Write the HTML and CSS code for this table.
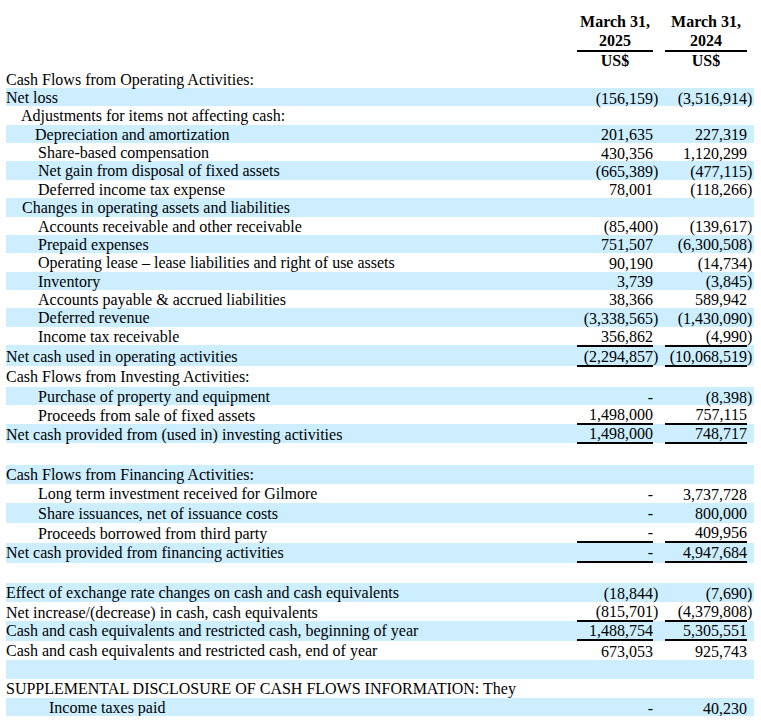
FILE: index.html
```html
<!DOCTYPE html>
<html>
<head>
<meta charset="utf-8">
<link rel="stylesheet" href="styles.css">
</head>
<body>
<div class="sheet">
  <div class="row hdr">
    <div></div>
    <div class="v1 hd top">March 31,<br>2025</div>
    <div class="v2 hd top">March 31,<br>2024</div>
  </div>
  <div class="row hdr">
    <div></div>
    <div class="v1 hd unit">US$</div>
    <div class="v2 hd unit">US$</div>
  </div>

  <div class="row h18"><div class="lbl">Cash Flows from Operating Activities:</div></div>
  <div class="row h18x sh"><div class="lbl">Net loss</div><div class="v1"><span class="n">(156,159)</span></div><div class="v2"><span class="n">(3,516,914)</span></div></div>
  <div class="row h18x"><div class="lbl i1">Adjustments for items not affecting cash:</div></div>
  <div class="row h18x sh"><div class="lbl i2">Depreciation and amortization</div><div class="v1">201,635</div><div class="v2">227,319</div></div>
  <div class="row h18x"><div class="lbl i3">Share-based compensation</div><div class="v1">430,356</div><div class="v2">1,120,299</div></div>
  <div class="row h18x sh"><div class="lbl i3">Net gain from disposal of fixed assets</div><div class="v1"><span class="n">(665,389)</span></div><div class="v2"><span class="n">(477,115)</span></div></div>
  <div class="row h18x"><div class="lbl i3">Deferred income tax expense</div><div class="v1">78,001</div><div class="v2"><span class="n">(118,266)</span></div></div>
  <div class="row h18x sh"><div class="lbl i1b">Changes in operating assets and liabilities</div></div>
  <div class="row h18x"><div class="lbl i3">Accounts receivable and other receivable</div><div class="v1"><span class="n">(85,400)</span></div><div class="v2"><span class="n">(139,617)</span></div></div>
  <div class="row h18x sh"><div class="lbl i3">Prepaid expenses</div><div class="v1">751,507</div><div class="v2"><span class="n">(6,300,508)</span></div></div>
  <div class="row h18x"><div class="lbl i3">Operating lease – lease liabilities and right of use assets</div><div class="v1">90,190</div><div class="v2"><span class="n">(14,734)</span></div></div>
  <div class="row h18x sh"><div class="lbl i3">Inventory</div><div class="v1">3,739</div><div class="v2"><span class="n">(3,845)</span></div></div>
  <div class="row h18x"><div class="lbl i3">Accounts payable &amp; accrued liabilities</div><div class="v1">38,366</div><div class="v2">589,942</div></div>
  <div class="row h18x sh"><div class="lbl i3">Deferred revenue</div><div class="v1"><span class="n">(3,338,565)</span></div><div class="v2"><span class="n">(1,430,090)</span></div></div>
  <div class="row h18x"><div class="lbl i3">Income tax receivable</div><div class="v1">356,862</div><div class="v2"><span class="n">(4,990)</span></div></div>
  <div class="row h21 sh ol ul"><div class="lbl">Net cash used in operating activities</div><div class="v1"><span class="n">(2,294,857)</span></div><div class="v2"><span class="n">(10,068,519)</span></div></div>

  <div class="row h21"><div class="lbl">Cash Flows from Investing Activities:</div></div>
  <div class="row h18 sh"><div class="lbl i3">Purchase of property and equipment</div><div class="v1">-</div><div class="v2"><span class="n">(8,398)</span></div></div>
  <div class="row h19 ul"><div class="lbl i3">Proceeds from sale of fixed assets</div><div class="v1">1,498,000</div><div class="v2">757,115</div></div>
  <div class="row h19 sh ul"><div class="lbl">Net cash provided from (used in) investing activities</div><div class="v1">1,498,000</div><div class="v2">748,717</div></div>
  <div class="row h22"></div>

  <div class="row h19 sh"><div class="lbl">Cash Flows from Financing Activities:</div></div>
  <div class="row h19"><div class="lbl i3">Long term investment received for Gilmore</div><div class="v1">-</div><div class="v2">3,737,728</div></div>
  <div class="row h20 sh"><div class="lbl i3">Share issuances, net of issuance costs</div><div class="v1">-</div><div class="v2">800,000</div></div>
  <div class="row h19x ul"><div class="lbl i3">Proceeds borrowed from third party</div><div class="v1">-</div><div class="v2">409,956</div></div>
  <div class="row h20 sh ul"><div class="lbl">Net cash provided from financing activities</div><div class="v1">-</div><div class="v2">4,947,684</div></div>
  <div class="row h20x"></div>

  <div class="row h19 sh"><div class="lbl">Effect of exchange rate changes on cash and cash equivalents</div><div class="v1"><span class="n">(18,844)</span></div><div class="v2"><span class="n">(7,690)</span></div></div>
  <div class="row h18y ul"><div class="lbl">Net increase/(decrease) in cash, cash equivalents</div><div class="v1"><span class="n">(815,701)</span></div><div class="v2"><span class="n">(4,379,808)</span></div></div>
  <div class="row h20x sh ul"><div class="lbl">Cash and cash equivalents and restricted cash, beginning of year</div><div class="v1">1,488,754</div><div class="v2">5,305,551</div></div>
  <div class="row h19"><div class="lbl">Cash and cash equivalents and restricted cash, end of year</div><div class="v1">673,053</div><div class="v2">925,743</div></div>
  <div class="row h19 sh"></div>
  <div class="row h19"><div class="lbl">SUPPLEMENTAL DISCLOSURE OF CASH FLOWS INFORMATION: They</div></div>
  <div class="row h18 sh"><div class="lbl i4">Income taxes paid</div><div class="v1">-</div><div class="v2">40,230</div></div>
</div>
</body>
</html>
```

FILE: styles.css
```css
html, body {
  margin: 0;
  padding: 0;
  background: #ffffff;
}

body {
  font-family: "Liberation Serif", "Times New Roman", serif;
  font-size: 16px;
  color: #000000;
}

.sheet {
  width: 748px;
  margin-left: 6px;
  padding-top: 12px;
}

.row {
  display: grid;
  grid-template-columns: 571px 88px 89px;
}

.sh {
  background: #cceeff;
}

.h18 { height: 18px; }
.h18x { height: 18.36px; }
.h18y { height: 18.5px; }
.h19 { height: 19px; }
.h19x { height: 19.5px; }
.h20 { height: 20px; }
.h20x { height: 20.5px; }
.h21 { height: 21px; }
.h22 { height: 22px; }

.lbl {
  display: flex;
  align-items: center;
  white-space: nowrap;
  line-height: 18px;
  padding-top: 1px;
  box-sizing: border-box;
}

.i1 { padding-left: 15px; }
.i1b { padding-left: 16px; }
.i2 { padding-left: 29px; }
.i3 { padding-left: 32px; }
.i4 { padding-left: 43px; }

.v1,
.v2 {
  display: flex;
  align-items: center;
  justify-content: flex-end;
  box-sizing: border-box;
  white-space: nowrap;
  line-height: 17px;
  padding-top: 1px;
}

.v1 { width: 76px; }
.v2 { width: 82px; }

.n {
  margin-right: -5.3px;
}

.ul .v1,
.ul .v2 {
  border-bottom: 2px solid #000000;
}

.ol .v1,
.ol .v2 {
  border-top: 2px solid #000000;
}

.hdr .hd {
  display: block;
  text-align: center;
  font-weight: bold;
  line-height: 19px;
  padding-top: 0;
}

.hdr .top {
  border-bottom: 2px solid #000000;
}

.hdr .unit {
  line-height: 18px;
}
```
